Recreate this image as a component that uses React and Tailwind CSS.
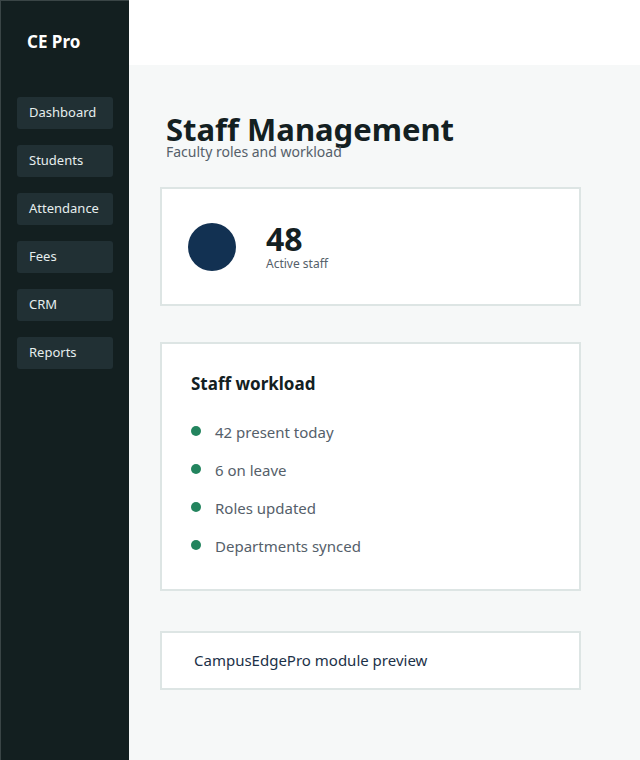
export default function App() {
  const nav = ["Dashboard", "Students", "Attendance", "Fees", "CRM", "Reports"];
  const items = ["42 present today", "6 on leave", "Roles updated", "Departments synced"];
  return (
    <div className="flex w-[640px] h-[760px] overflow-hidden" style={{ fontFamily: '"Noto Sans", "Open Sans", sans-serif' }}>
      <aside className="w-[129px] shrink-0 bg-[#131f20] border-l border-t border-[#3a4546] flex flex-col">
        <div className="h-[64px] flex items-center pl-[26px] pt-[18px] text-white text-[17px] font-bold">CE Pro</div>
        <nav className="flex flex-col gap-4 px-4 pt-8">
          {nav.map((n) => (
            <div key={n} className="h-[32px] rounded-[3px] bg-[#213034] flex items-center pl-3 text-[13px] text-[#e6eeee]">{n}</div>
          ))}
        </nav>
      </aside>
      <div className="flex-1 flex flex-col bg-[#f6f8f8]">
        <header className="h-[65px] bg-white shrink-0" />
        <main className="pl-[31px] pr-[59px] pt-[44px]">
          <div className="pl-[6px]">
            <h1 className="text-[31px] font-bold text-[#132022] leading-[40px]">Staff Management</h1>
            <p className="text-[14px] text-[#55606a] leading-[16px] -mt-[5px]">Faculty roles and workload</p>
          </div>
          <div className="mt-[27px] h-[119px] bg-white border-2 border-[#dde5e4] flex items-center pl-[26px]">
            <div className="w-[48px] h-[48px] rounded-full bg-[#123152]" />
            <div className="ml-[30px]">
              <div className="text-[32px] font-bold text-[#132022] leading-[34px]">48</div>
              <div className="text-[12px] text-[#55606a] leading-[16px]">Active staff</div>
            </div>
          </div>
          <div className="mt-[36px] h-[249px] bg-white border-2 border-[#dde5e4] pl-[29px] pt-[28px]">
            <h2 className="text-[17px] font-bold text-[#132022] leading-[24px]">Staff workload</h2>
            <ul className="mt-[24px] flex flex-col gap-[14px]">
              {items.map((t) => (
                <li key={t} className="flex items-center h-[24px] text-[15px] text-[#55606a]">
                  <span className="w-[10px] h-[10px] rounded-full bg-[#23845e] mr-[14px] -mt-[2px]" />
                  {t}
                </li>
              ))}
            </ul>
          </div>
          <div className="mt-[40px] h-[59px] bg-white border-2 border-[#dde5e4] flex items-center pl-[32px] text-[15px] text-[#1c3148]">
            CampusEdgePro module preview
          </div>
        </main>
      </div>
    </div>
  );
}
